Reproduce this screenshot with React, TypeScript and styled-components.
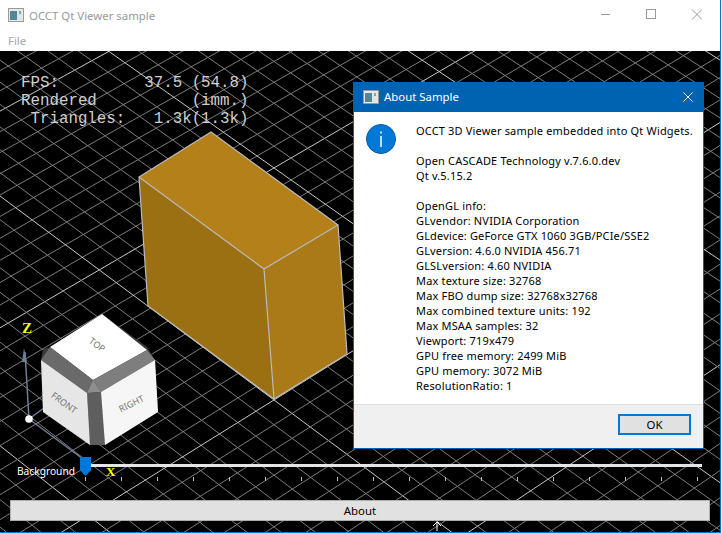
import React from "react";
import styled, { createGlobalStyle } from "styled-components";

const INFO_LINES = [
  "OCCT 3D Viewer sample embedded into Qt Widgets.",
  "",
  "Open CASCADE Technology v.7.6.0.dev",
  "Qt v.5.15.2",
  "",
  "OpenGL info:",
  "GLvendor: NVIDIA Corporation",
  "GLdevice: GeForce GTX 1060 3GB/PCIe/SSE2",
  "GLversion: 4.6.0 NVIDIA 456.71",
  "GLSLversion: 4.60 NVIDIA",
  "Max texture size: 32768",
  "Max FBO dump size: 32768x32768",
  "Max combined texture units: 192",
  "Max MSAA samples: 32",
  "Viewport: 719x479",
  "GPU free memory: 2499 MiB",
  "GPU memory: 3072 MiB",
  "ResolutionRatio: 1",
];

const STATS = `FPS:         37.5 (54.8)
Rendered          (imm.)
 Triangles:   1.3k(1.3k)`;

const TICKS = Array.from({ length: 18 }, (_, i) => i);

// ground grid in perspective, u runs down-right, v runs up-right
const project = (u: number, v: number) => {
  const w = 1 + 0.003 * (v - u);
  return [274 + (18 * u + 18 * v) / w, 400 + (13.4 * u - 11.2 * v) / w];
};

const gridLines = () => {
  const lines: React.ReactNode[] = [];
  for (let i = -60; i <= 40; i++) {
    const major = i % 10 === 0;
    const stroke = major ? "#c8c8c8" : "#7c7c7c";
    const [ax, ay] = project(i, -60);
    const [bx, by] = project(i, 60);
    const [cx, cy] = project(-60, i);
    const [dx, dy] = project(60, i);
    lines.push(<line key={`u${i}`} x1={ax} y1={ay} x2={bx} y2={by} stroke={stroke} />);
    lines.push(<line key={`v${i}`} x1={cx} y1={cy} x2={dx} y2={dy} stroke={stroke} />);
  }
  return lines;
};

const App = () => (
  <>
    <GlobalStyle />
    <Window>
      <TitleBar>
        <AppIcon />
        <WindowTitle>OCCT Qt Viewer sample</WindowTitle>
        <WindowButtons>
          <svg width="11" height="11" viewBox="0 0 11 11">
            <path d="M2 5.5H11" stroke="#999" fill="none" />
          </svg>
          <svg width="11" height="11" viewBox="0 0 11 11">
            <rect x="1.5" y="0.5" width="9" height="9" stroke="#999" fill="none" />
          </svg>
          <svg width="11" height="11" viewBox="0 0 11 11">
            <path d="M1 0.5L11 10.5M11 0.5L1 10.5" stroke="#999" fill="none" />
          </svg>
        </WindowButtons>
      </TitleBar>
      <MenuBar>File</MenuBar>
      <Viewport>
        <Scene viewBox="0 51 720 481">
          <g strokeWidth="1">{gridLines()}</g>

          <polygon points="139,177 264,269 338,225 211,132" fill="#b4801a" />
          <polygon points="139,177 264,269 274,399 148,306" fill="#9b7012" />
          <polygon points="264,269 338,225 347,354 274,399" fill="#ab7a18" />
          <path
            d="M139 177L264 269L338 225L211 132ZM139 177L148 306L274 399L347 354L338 225M264 269L274 399"
            fill="none"
            stroke="#bcbcbc"
            strokeWidth="1.2"
          />

          <path d="M29 419L25 352M29 419L83 459M29 419L44 408" stroke="#6f7f96" strokeWidth="1.5" />
          <polygon points="24,348 27,362 22,362" fill="#6f7f96" />
          <circle cx="29" cy="419" r="3.8" fill="#fff" />
          <AxisLabel x="22" y="333" fontSize="15">Z</AxisLabel>
          <AxisLabel x="106" y="476" fontSize="13">X</AxisLabel>

          <polygon points="102,314 147,347 155,360 158,412 105,445 90,445 43,412 41,360 43,349 50,347" fill="#3a3a3a" />
          <polygon points="102,314 147,350 93,380 50,347" fill="#fff" />
          <polygon points="50,347 93,380 87,393 41,360" fill="#6a6a6a" />
          <polygon points="147,350 93,380 101,392 155,360" fill="#7e7e7e" />
          <polygon points="93,380 87,393 101,392" fill="#8e8e8e" />
          <polygon points="87,393 101,392 105,445 90,445" fill="#5e5e5e" />
          <polygon points="41,360 87,393 90,445 43,412" fill="#e6e6e6" />
          <polygon points="101,392 155,360 158,412 105,445" fill="#f6f6f6" />
          <CubeLabel x="97" y="348" transform="rotate(36 97 345)">TOP</CubeLabel>
          <CubeLabel x="64" y="406" transform="rotate(36 64 403)">FRONT</CubeLabel>
          <CubeLabel x="131" y="407" transform="rotate(-26 131 403)">RIGHT</CubeLabel>

          <path d="M437 531V522M433 526L437 522L441 526" stroke="#fff" fill="none" />
        </Scene>

        <Stats>{STATS}</Stats>

        <Dialog>
          <DialogTitle>
            <AppIcon />
            <DialogCaption>About Sample</DialogCaption>
            <svg width="10" height="10" viewBox="0 0 10 10">
              <path d="M0.5 0.5L9.5 9.5M9.5 0.5L0.5 9.5" stroke="#fff" fill="none" />
            </svg>
          </DialogTitle>
          <DialogBody>
            <InfoIcon viewBox="0 0 30 30">
              <circle cx="15" cy="15" r="14.5" fill="#0078d7" stroke="#005a9e" />
              <path d="M15 12V23M15 7.5V9.5" stroke="#fff" strokeWidth="1.5" />
            </InfoIcon>
            <InfoText>
              {INFO_LINES.map((line, i) => (
                <InfoLine key={i}>{line}</InfoLine>
              ))}
            </InfoText>
          </DialogBody>
          <DialogFooter>
            <OkButton>OK</OkButton>
          </DialogFooter>
        </Dialog>

        <SliderRow>
          <SliderLabel>Background</SliderLabel>
          <Slider>
            <SliderHandle />
            <SliderTrack />
            <Ticks>
              {TICKS.map((t) => (
                <Tick key={t} />
              ))}
            </Ticks>
          </Slider>
        </SliderRow>
        <AboutButton>About</AboutButton>
      </Viewport>
    </Window>
  </>
);

export default App;

const AppIcon = () => (
  <svg width="16" height="14" viewBox="0 0 16 14">
    <rect x="0.5" y="0.5" width="15" height="13" fill="#e8e8e8" stroke="#9a9a9a" />
    <rect x="2" y="3" width="7" height="9" fill="#4f8a94" />
    <rect x="9" y="3" width="5" height="9" fill="#dfe4e6" />
    <rect x="11" y="3" width="2" height="3" fill="#7fa6b0" />
  </svg>
);

const GlobalStyle = createGlobalStyle`
  html, body {
    margin: 0;
    padding: 0;
    background: #fff;
    font-family: "Noto Sans", "Open Sans", sans-serif;
  }
`;

const Window = styled.div`
  display: flex;
  flex-direction: column;
  width: 721px;
  height: 533px;
  box-sizing: border-box;
  border-right: 1px solid #0078d7;
  border-bottom: 1px solid #0078d7;
`;

const TitleBar = styled.div`
  display: flex;
  align-items: center;
  height: 30px;
  padding-left: 8px;
  background: #fff;
`;

const WindowTitle = styled.span`
  margin-left: 5px;
  font-size: 11.4px;
  color: #999;
`;

const WindowButtons = styled.div`
  display: flex;
  gap: 35px;
  margin: 0 18px 2px auto;
`;

const MenuBar = styled.div`
  height: 21px;
  padding-left: 8px;
  font-size: 11.4px;
  line-height: 22px;
  color: #a8a8a8;
  background: #fff;
`;

const Viewport = styled.div`
  position: relative;
  flex: 1;
  display: flex;
  flex-direction: column;
  justify-content: flex-end;
  background: #000;
  overflow: hidden;
`;

const Scene = styled.svg`
  position: absolute;
  top: 0;
  left: 0;
  width: 720px;
  height: 481px;
`;

const AxisLabel = styled.text`
  font-family: "Liberation Serif", serif;
  font-weight: bold;
  fill: #ffff00;
`;

const CubeLabel = styled.text`
  font-family: "Noto Sans", sans-serif;
  font-size: 9px;
  fill: #777;
  text-anchor: middle;
`;

const Stats = styled.pre`
  position: absolute;
  top: 23px;
  left: 21px;
  margin: 0;
  font-family: "Liberation Mono", monospace;
  font-size: 15.8px;
  line-height: 18px;
  color: #cfcfcf;
`;

const Dialog = styled.div`
  position: absolute;
  top: 31px;
  left: 353px;
  width: 351px;
  height: 367px;
  box-sizing: border-box;
  display: flex;
  flex-direction: column;
  border: 1px solid #0063b1;
  background: #f0f0f0;
`;

const DialogTitle = styled.div`
  display: flex;
  align-items: center;
  height: 29px;
  box-sizing: border-box;
  padding: 0 10px 2px 9px;
  background: #0063b1;
  flex-shrink: 0;
`;

const DialogCaption = styled.span`
  flex: 1;
  margin-left: 5px;
  font-size: 11.4px;
  color: #fff;
`;

const DialogBody = styled.div`
  display: flex;
  gap: 20px;
  height: 293px;
  padding: 12px 0 0 12px;
  box-sizing: border-box;
  background: #fff;
  border-bottom: 1px solid #dfdfdf;
`;

const InfoIcon = styled.svg`
  flex: none;
  width: 30px;
  height: 30px;
`;

const InfoText = styled.div`
  margin-top: -1px;
  font-size: 11px;
  letter-spacing: 0.17px;
  line-height: 15px;
  color: #000;
  white-space: nowrap;
`;

const InfoLine = styled.div`
  height: 15px;
`;

const DialogFooter = styled.div`
  flex: 1;
  display: flex;
  align-items: flex-start;
  justify-content: flex-end;
  padding: 9px 12px 0 0;
`;

const OkButton = styled.div`
  width: 73px;
  height: 21px;
  box-sizing: border-box;
  border: 2px solid #0078d7;
  background: #e1e1e1;
  font-size: 11.4px;
  line-height: 18px;
  text-align: center;
  color: #000;
`;

const SliderRow = styled.div`
  position: relative;
  display: flex;
  align-items: flex-start;
  height: 24px;
  margin-bottom: 19px;
  padding-left: 17px;
`;

const SliderLabel = styled.span`
  width: 63px;
  padding-top: 7px;
  font-size: 10.2px;
  line-height: 15px;
  color: #fff;
`;

const Slider = styled.div`
  position: relative;
  display: flex;
  flex-direction: column;
  width: 622px;
`;

const SliderHandle = styled.div`
  position: absolute;
  top: 0;
  left: 0;
  width: 11px;
  height: 19px;
  background: #0078d7;
  clip-path: polygon(0 0, 100% 0, 100% 70%, 50% 100%, 0 70%);
`;

const SliderTrack = styled.div`
  height: 3px;
  margin: 7px 0 0 11px;
  background: #e5e5e5;
`;

const Ticks = styled.div`
  display: flex;
  margin: 10px 0 0 5px;
`;

const Tick = styled.div`
  flex: none;
  width: 36px;
  height: 4px;
  box-sizing: border-box;
  border-left: 1px solid #bbb;
`;

const AboutButton = styled.div`
  position: relative;
  height: 21px;
  margin: 0 10px 11px;
  box-sizing: border-box;
  border: 1px solid #adadad;
  background: #e1e1e1;
  font-size: 11.4px;
  line-height: 19px;
  text-align: center;
  color: #000;
`;
